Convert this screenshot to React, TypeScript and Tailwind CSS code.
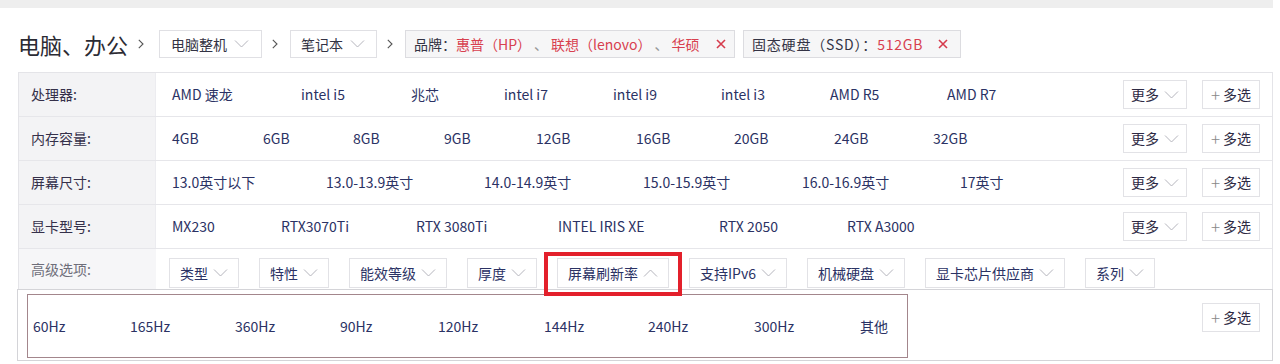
import React from "react";

type Item = { text: string; w: string };

const rows: { label: string; values: Item[] }[] = [
  {
    label: "处理器:",
    values: [
      { text: "AMD 速龙", w: "w-[129px]" },
      { text: "intel i5", w: "w-[110px]" },
      { text: "兆芯", w: "w-[93px]" },
      { text: "intel i7", w: "w-[109px]" },
      { text: "intel i9", w: "w-[108px]" },
      { text: "intel i3", w: "w-[109px]" },
      { text: "AMD R5", w: "w-[117px]" },
      { text: "AMD R7", w: "w-auto" },
    ],
  },
  {
    label: "内存容量:",
    values: [
      { text: "4GB", w: "w-[91px]" },
      { text: "6GB", w: "w-[90px]" },
      { text: "8GB", w: "w-[91px]" },
      { text: "9GB", w: "w-[92px]" },
      { text: "12GB", w: "w-[100px]" },
      { text: "16GB", w: "w-[98px]" },
      { text: "20GB", w: "w-[100px]" },
      { text: "24GB", w: "w-[99px]" },
      { text: "32GB", w: "w-auto" },
    ],
  },
  {
    label: "屏幕尺寸:",
    values: [
      { text: "13.0英寸以下", w: "w-[154px]" },
      { text: "13.0-13.9英寸", w: "w-[158px]" },
      { text: "14.0-14.9英寸", w: "w-[159px]" },
      { text: "15.0-15.9英寸", w: "w-[159px]" },
      { text: "16.0-16.9英寸", w: "w-[158px]" },
      { text: "17英寸", w: "w-auto" },
    ],
  },
  {
    label: "显卡型号:",
    values: [
      { text: "MX230", w: "w-[109px]" },
      { text: "RTX3070Ti", w: "w-[135px]" },
      { text: "RTX 3080Ti", w: "w-[142px]" },
      { text: "INTEL IRIS XE", w: "w-[161px]" },
      { text: "RTX 2050", w: "w-[128px]" },
      { text: "RTX A3000", w: "w-auto" },
    ],
  },
];

const advanced = ["类型", "特性", "能效等级", "厚度", "屏幕刷新率", "支持IPv6", "机械硬盘", "显卡芯片供应商", "系列"];

const refresh: Item[] = [
  { text: "60Hz", w: "w-[97px]" },
  { text: "165Hz", w: "w-[105px]" },
  { text: "360Hz", w: "w-[105px]" },
  { text: "90Hz", w: "w-[98px]" },
  { text: "120Hz", w: "w-[106px]" },
  { text: "144Hz", w: "w-[104px]" },
  { text: "240Hz", w: "w-[106px]" },
  { text: "300Hz", w: "w-[106px]" },
  { text: "其他", w: "w-auto" },
];

const ChevronDown = ({ up = false }: { up?: boolean }) => (
  <svg width="15" height="8" viewBox="0 0 15 8" className="shrink-0">
    <polyline
      points={up ? "1,7.5 7.5,1 14,7.5" : "1,0.5 7.5,7 14,0.5"}
      fill="none"
      stroke="#b4b4bc"
      strokeWidth="1"
    />
  </svg>
);

const ChevronRight = () => (
  <svg width="6" height="10" viewBox="0 0 6 10" className="shrink-0">
    <polyline points="0.8,0.8 5,5 0.8,9.2" fill="none" stroke="#555" strokeWidth="1.1" />
  </svg>
);

const Cross = () => (
  <svg width="10" height="10" viewBox="0 0 10 10" className="shrink-0">
    <path d="M1 1 L9 9 M9 1 L1 9" stroke="#d63b4c" strokeWidth="1.6" />
  </svg>
);

const MultiButton = () => (
  <div className="flex items-center justify-center gap-[3px] h-[29px] w-[58px] border border-[#e2e2e6] bg-white text-[14px] text-[#2e2a44]">
    <span className="text-[#888] text-[17px] leading-none font-light">+</span>
    <span>多选</span>
  </div>
);

const MoreButtons = () => (
  <div className="flex items-center gap-[15px] pr-[12px]">
    <div className="flex items-center gap-[5px] h-[29px] w-[64px] pl-[7px] border border-[#e2e2e6] bg-white text-[14px] text-[#2e2a44]">
      <span>更多</span>
      <ChevronDown />
    </div>
    <MultiButton />
  </div>
);

export default function App() {
  return (
    <div className="relative w-[1280px] h-[364px] bg-white overflow-hidden font-['Noto_Sans_CJK_SC',sans-serif]">
      <div className="h-[8px] w-[1273px] bg-[#eeeeee]" />

      {/* Breadcrumb */}
      <div className="flex items-center h-[28px] mt-[22px] ml-[18px]">
        <span className="text-[22px] leading-none text-[#2b2b33]">电脑、办公</span>
        <span className="ml-[10px] mr-[15px]">
          <ChevronRight />
        </span>
        <div className="flex items-center gap-[7px] h-[28px] w-[103px] pl-[11px] border border-[#e0e0e4] text-[14px] text-[#333344]">
          <span>电脑整机</span>
          <ChevronDown />
        </div>
        <span className="ml-[10px] mr-[12px]">
          <ChevronRight />
        </span>
        <div className="flex items-center gap-[7px] h-[28px] w-[87px] pl-[10px] border border-[#e0e0e4] text-[14px] text-[#333344]">
          <span>笔记本</span>
          <ChevronDown />
        </div>
        <span className="ml-[10px] mr-[12px]">
          <ChevronRight />
        </span>
        <div className="flex items-center h-[28px] w-[330px] pl-[8px] border border-[#dcdce0] bg-[#f6f6f7] text-[14px] whitespace-nowrap">
          <span className="text-[#333344]">品牌：</span>
          <span className="text-[#d8404f]">惠普（HP）</span>
          <span className="text-[#999] mx-[3px]">、</span>
          <span className="text-[#d8404f]">联想（lenovo）</span>
          <span className="text-[#999] mx-[3px]">、</span>
          <span className="text-[#d8404f]">华硕</span>
          <span className="ml-[16px]">
            <Cross />
          </span>
        </div>
        <div className="flex items-center h-[28px] w-[218px] ml-[8px] pl-[8px] border border-[#dcdce0] bg-[#f6f6f7] text-[14px] whitespace-nowrap tracking-[0.8px]">
          <span className="text-[#333344]">固态硬盘（SSD）：</span>
          <span className="text-[#d8404f]">512GB</span>
          <span className="ml-[15px]">
            <Cross />
          </span>
        </div>
      </div>

      {/* Filter table */}
      <div className="mt-[14px] ml-[18px] w-[1255px] border-x border-t border-[#e4e4e8]">
        {rows.map((row) => (
          <div key={row.label} className="flex h-[44px] border-b border-[#e6e6ea]">
            <div className="flex items-center w-[137px] shrink-0 pl-[12px] bg-[#f3f3f5] border-r border-[#ececf0] text-[14px] text-[#35304a]">
              {row.label}
            </div>
            <div className="flex flex-1 items-center pl-[16px] text-[14px] text-[#2b3264] whitespace-nowrap">
              {row.values.map((v) => (
                <span key={v.text} className={`shrink-0 ${v.w}`}>
                  {v.text}
                </span>
              ))}
            </div>
            <div className="flex items-center">
              <MoreButtons />
            </div>
          </div>
        ))}

        {/* Advanced options */}
        <div className="flex h-[40px]">
          <div className="flex items-center w-[137px] shrink-0 pl-[12px] bg-[#f6f6f8] text-[14px] text-[#6e6e7a]">
            高级选项:
          </div>
          <div className="flex items-center gap-[20px] pl-[13px] pt-[9px] self-start">
            {advanced.map((a) => (
              <div
                key={a}
                className="flex items-center gap-[5px] h-[30px] px-[10px] border border-[#e2e2e6] bg-white text-[14px] text-[#2b3264] whitespace-nowrap"
              >
                <span>{a}</span>
                <ChevronDown up={a === "屏幕刷新率"} />
              </div>
            ))}
          </div>
        </div>
      </div>

      {/* Expanded dropdown */}
      <div className="flex ml-[17px] w-[1256px] h-[72px] border border-[#d4d4d8] bg-white">
        <div className="flex items-center ml-[9px] mt-[4px] w-[881px] h-[64px] border border-[#a3868c] pl-[5px] text-[14px] text-[#2b3264] whitespace-nowrap">
          {refresh.map((r) => (
            <span key={r.text} className={`shrink-0 ${r.w}`}>
              {r.text}
            </span>
          ))}
        </div>
        <div className="flex-1" />
        <div className="mt-[13px] mr-[12px]">
          <MultiButton />
        </div>
      </div>

      {/* Red highlight annotation */}
      <div className="absolute left-[544px] top-[252px] w-[138px] h-[44px] border-[4px] border-[#e3202b]" />
    </div>
  );
}
